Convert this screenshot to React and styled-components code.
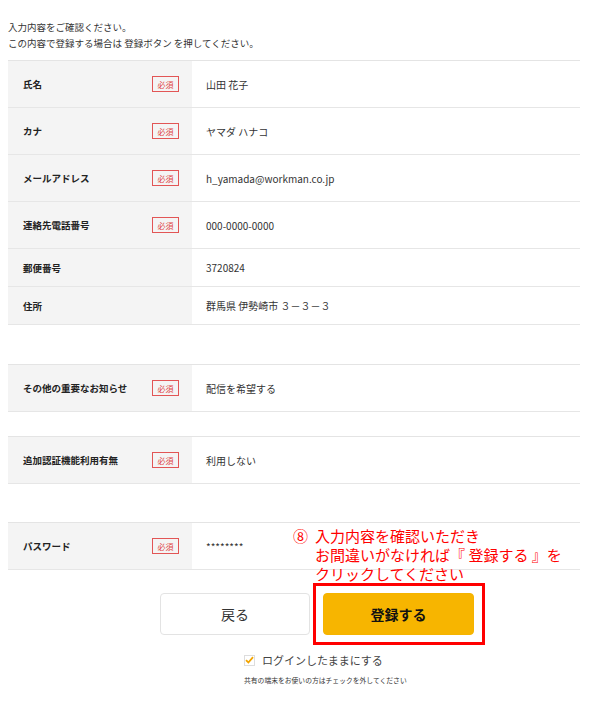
import React from "react";
import styled, { createGlobalStyle } from "styled-components";

const GlobalStyle = createGlobalStyle`
  body {
    margin: 0;
    background: #fff;
    font-family: "Noto Sans CJK JP", "Noto Sans", sans-serif;
    color: #333;
  }
`;

const Page = styled.div`
  position: relative;
  width: 590px;
  padding: 19px 10px 0 8px;
  box-sizing: border-box;
`;

const Intro = styled.p`
  margin: 0;
  font-size: 9.5px;
  line-height: 16px;
  color: #333;
`;

const Group = styled.div`
  margin-top: ${(p) => p.$gap}px;
  border-top: 1px solid #e4e4e4;
`;

const Row = styled.div`
  display: flex;
  height: ${(p) => (p.$short ? 37 : 46)}px;
  border-bottom: 1px solid #e6e6e6;
`;

const LabelCell = styled.div`
  width: 184px;
  flex-shrink: 0;
  box-sizing: border-box;
  padding: 0 13px 0 15px;
  background: #f4f4f4;
  display: flex;
  align-items: center;
  justify-content: space-between;
  font-size: 9.5px;
  font-weight: 700;
  color: #222;
`;

const Badge = styled.span`
  width: 27px;
  height: 16px;
  box-sizing: border-box;
  border: 1px solid #e25555;
  color: #e04444;
  font-size: 8px;
  font-weight: 400;
  display: flex;
  align-items: center;
  justify-content: center;
`;

const ValueCell = styled.div`
  flex: 1;
  padding-left: 14px;
  display: flex;
  align-items: center;
  font-size: 10px;
  color: #333;
`;

const Actions = styled.div`
  margin-top: 13px;
  padding-left: 152px;
  display: flex;
  align-items: center;
  gap: 3px;
`;

const Button = styled.button`
  width: ${(p) => (p.$primary ? 151 : 150)}px;
  height: 42px;
  box-sizing: border-box;
  border-radius: 4px;
  border: 1px solid ${(p) => (p.$primary ? "#f5b400" : "#e3e3e3")};
  background: ${(p) => (p.$primary ? "#f7b500" : "#fff")};
  color: ${(p) => (p.$primary ? "#111" : "#333")};
  font-family: inherit;
  font-size: 14px;
  font-weight: ${(p) => (p.$primary ? 700 : 400)};
  cursor: pointer;
`;

const Highlight = styled.div`
  border: 3px solid #f00;
  padding: 7px 8px 7px 7px;
`;

const Note = styled.div`
  position: absolute;
  left: 293px;
  top: 526px;
  display: flex;
  gap: 7px;
  color: #f00;
  font-size: 15px;
  line-height: 19px;
`;

const Keep = styled.div`
  margin: 5px 0 0 236px;
  display: flex;
  flex-direction: column;
  align-items: flex-start;
`;

const CheckRow = styled.label`
  display: flex;
  align-items: center;
  gap: 7px;
  font-size: 11px;
  color: #444;
  height: 20px;
`;

const Box = styled.span`
  width: 11px;
  height: 11px;
  box-sizing: border-box;
  border: 1px solid #ddd;
  background: #fff;
  display: flex;
  align-items: center;
  justify-content: center;
`;

const Small = styled.p`
  margin: 5px 0 0;
  font-size: 6.8px;
  color: #333;
`;

const groups = [
  {
    gap: 9,
    rows: [
      { label: "氏名", req: true, value: "山田 花子" },
      { label: "カナ", req: true, value: "ヤマダ ハナコ" },
      { label: "メールアドレス", req: true, value: "h_yamada@workman.co.jp" },
      { label: "連絡先電話番号", req: true, value: "000-0000-0000" },
      { label: "郵便番号", value: "3720824" },
      { label: "住所", value: "群馬県 伊勢崎市 ３－３－３" },
    ],
  },
  { gap: 39, rows: [{ label: "その他の重要なお知らせ", req: true, value: "配信を希望する" }] },
  { gap: 24, rows: [{ label: "追加認証機能利用有無", req: true, value: "利用しない" }] },
  { gap: 38, rows: [{ label: "パスワード", req: true, value: "********" }] },
];

export default function App() {
  return (
    <Page>
      <GlobalStyle />
      <Intro>
        入力内容をご確認ください。
        <br />
        この内容で登録する場合は 登録ボタン を押してください。
      </Intro>
      {groups.map((g, i) => (
        <Group key={i} $gap={g.gap}>
          {g.rows.map((r) => (
            <Row key={r.label} $short={!r.req}>
              <LabelCell>
                {r.label}
                {r.req && <Badge>必須</Badge>}
              </LabelCell>
              <ValueCell>{r.value}</ValueCell>
            </Row>
          ))}
        </Group>
      ))}
      <Actions>
        <Button>戻る</Button>
        <Highlight>
          <Button $primary>登録する</Button>
        </Highlight>
      </Actions>
      <Keep>
        <CheckRow>
          <Box>
            <svg width="9" height="8" viewBox="0 0 9 8">
              <path d="M1 4.2 L3.4 6.5 L8 1.2" fill="none" stroke="#f2a400" strokeWidth="1.8" />
            </svg>
          </Box>
          ログインしたままにする
        </CheckRow>
        <Small>共有の端末をお使いの方はチェックを外してください</Small>
      </Keep>
      <Note>
        <span>⑧</span>
        <span>
          入力内容を確認いただき
          <br />
          お間違いがなければ『 登録する 』を
          <br />
          クリックしてください
        </span>
      </Note>
    </Page>
  );
}
